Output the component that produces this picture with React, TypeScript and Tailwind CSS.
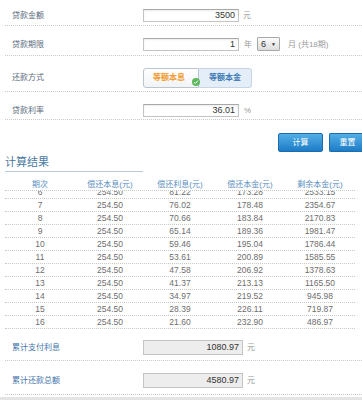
import React from "react";

const rows: [number, string, string, string, string][] = [
  [6, "254.50", "81.22", "173.28", "2533.15"],
  [7, "254.50", "76.02", "178.48", "2354.67"],
  [8, "254.50", "70.66", "183.84", "2170.83"],
  [9, "254.50", "65.14", "189.36", "1981.47"],
  [10, "254.50", "59.46", "195.04", "1786.44"],
  [11, "254.50", "53.61", "200.89", "1585.55"],
  [12, "254.50", "47.58", "206.92", "1378.63"],
  [13, "254.50", "41.37", "213.13", "1165.50"],
  [14, "254.50", "34.97", "219.52", "945.98"],
  [15, "254.50", "28.39", "226.11", "719.87"],
  [16, "254.50", "21.60", "232.90", "486.97"],
];

function Input({ value }: { value: string }) {
  return (
    <div className="w-[96px] h-[13px] border border-[#c4c4c4] border-t-[#a8a8a8] bg-white shadow-[inset_0_1px_2px_rgba(0,0,0,0.08)] flex items-center justify-end pr-[3px] text-[9px] leading-none text-[#333]">
      {value}
    </div>
  );
}

export default function App() {
  return (
    <div className="w-[362px] h-[400px] overflow-hidden bg-white font-['Liberation_Sans','Noto_Sans_CJK_SC',sans-serif] flex flex-col">
      {/* row 1 */}
      <div className="h-[26px] ml-[5px] pt-[9px] flex items-start border-b border-dotted border-[#c8c8c8]">
        <div className="w-[138px] pl-[7px] text-[8px] leading-[13px] text-[#5a6a7c]">贷款金额</div>
        <Input value="3500" />
        <span className="ml-[4px] text-[8px] leading-[13px] text-[#9a9a9a]">元</span>
      </div>
      {/* row 2 */}
      <div className="h-[30px] ml-[5px] pt-[12px] flex items-start border-b border-dotted border-[#c8c8c8]">
        <div className="w-[138px] pl-[7px] text-[8px] leading-[13px] text-[#5a6a7c]">贷款期限</div>
        <Input value="1" />
        <span className="ml-[5px] text-[8px] leading-[13px] text-[#9a9a9a]">年</span>
        <div className="ml-[5px] -mt-[1px] w-[23px] h-[14px] border border-[#a9a9a9] rounded-[1px] bg-gradient-to-b from-[#fbfbfb] to-[#dcdcdc] flex items-center justify-between pl-[3px] pr-[3px] text-[9px] leading-none text-[#333]">
          <span>6</span>
          <span className="text-[5px]">▼</span>
        </div>
        <span className="ml-[8px] text-[8px] leading-[13px] text-[#9a9a9a]">月 (共18期)</span>
      </div>
      {/* row 3 */}
      <div className="h-[36px] ml-[5px] pt-[12px] flex items-start border-b border-dotted border-[#c8c8c8]">
        <div className="w-[138px] pl-[7px] text-[8px] leading-[20px] text-[#5a6a7c]">还款方式</div>
        <div className="flex h-[20px]">
          <div className="relative w-[56px] h-[20px] border border-[#b9c4ce] rounded-l-[3px] bg-gradient-to-b from-[#ffffff] to-[#f1f3f5] flex items-center justify-center pr-[4px] text-[8px] font-bold text-[#f39a2e]">
            等额本息
            <div className="absolute right-[-2px] bottom-[1px] w-[8px] h-[8px] rounded-full bg-[#5cb85c] flex items-center justify-center">
              <svg width="6" height="6" viewBox="0 0 6 6">
                <path d="M1 3.2 L2.4 4.5 L5 1.6" stroke="#fff" strokeWidth="1" fill="none" />
              </svg>
            </div>
          </div>
          <div className="w-[53px] h-[20px] border border-l-0 border-[#c8d6e4] rounded-r-[3px] bg-[#e3eef8] flex items-center justify-center text-[8px] font-bold text-[#3b78b5]">
            等额本金
          </div>
        </div>
      </div>
      {/* row 4 */}
      <div className="h-[28px] ml-[5px] pt-[12px] flex items-start border-b border-dotted border-[#c8c8c8]">
        <div className="w-[138px] pl-[7px] text-[8px] leading-[13px] text-[#5a6a7c]">贷款利率</div>
        <Input value="36.01" />
        <span className="ml-[5px] text-[8px] leading-[13px] text-[#9a9a9a]">%</span>
      </div>
      {/* buttons */}
      <div className="h-[33px] pt-[13px] flex justify-end gap-[6px] mr-[-3px]">
        <div className="w-[45px] h-[19px] rounded-[2px] border border-[#1b6db0] bg-gradient-to-b from-[#52aee6] to-[#1c7cc6] flex items-center justify-center text-[8px] text-white">
          计算
        </div>
        <div className="w-[36px] h-[19px] rounded-l-[2px] border border-r-0 border-[#1b6db0] bg-gradient-to-b from-[#52aee6] to-[#1c7cc6] flex items-center justify-center text-[8px] text-white">
          重置
        </div>
      </div>
      {/* heading */}
      <div className="ml-[5px] w-[138px] h-[19px] pt-[2px] border-b border-[#b7cad9] text-[11px] leading-[14px] text-[#4b7aa2]">
        计算结果
      </div>
      {/* table header */}
      <div className="ml-[5px] w-[350px] h-[19px] pt-[8px] flex border-b border-dotted border-[#c8c8c8] text-[8px] leading-[10px] text-[#5b8dbf]">
        <div className="w-[70px] text-center">期次</div>
        <div className="w-[70px] text-center">偿还本息(元)</div>
        <div className="w-[70px] text-center">偿还利息(元)</div>
        <div className="w-[70px] text-center">偿还本金(元)</div>
        <div className="w-[70px] text-center">剩余本金(元)</div>
      </div>
      {/* table body */}
      <div className="ml-[5px] w-[350px] h-[138px] overflow-hidden">
        <div className="mt-[-5px]">
          {rows.map((r) => (
            <div key={r[0]} className="h-[13px] flex items-center border-b border-dotted border-[#c8c8c8] text-[8.5px] leading-none text-[#6e6e6e]">
              {r.map((c, i) => (
                <div key={i} className="w-[70px] text-center">
                  {c}
                </div>
              ))}
            </div>
          ))}
        </div>
      </div>
      {/* totals */}
      <div className="h-[32px] ml-[5px] pt-[11px] flex items-start border-b border-dotted border-[#c8c8c8]">
        <div className="w-[138px] pl-[7px] text-[8px] leading-[15px] text-[#4474aa]">累计支付利息</div>
        <div className="w-[100px] h-[15px] border border-[#c4c4c4] bg-[#ededed] flex items-center justify-end pr-[3px] text-[9px] leading-none text-[#333]">
          1080.97
        </div>
        <span className="ml-[4px] text-[8px] leading-[15px] text-[#9a9a9a]">元</span>
      </div>
      <div className="h-[34px] ml-[5px] pt-[12px] flex items-start border-b border-dotted border-[#c8c8c8]">
        <div className="w-[138px] pl-[7px] text-[8px] leading-[15px] text-[#4474aa]">累计还款总额</div>
        <div className="w-[100px] h-[15px] border border-[#c4c4c4] bg-[#ededed] flex items-center justify-end pr-[3px] text-[9px] leading-none text-[#333]">
          4580.97
        </div>
        <span className="ml-[4px] text-[8px] leading-[15px] text-[#9a9a9a]">元</span>
      </div>
      <div className="h-[2px]" />
      <div className="h-[3px] bg-[#e4e4e4]" />
    </div>
  );
}
